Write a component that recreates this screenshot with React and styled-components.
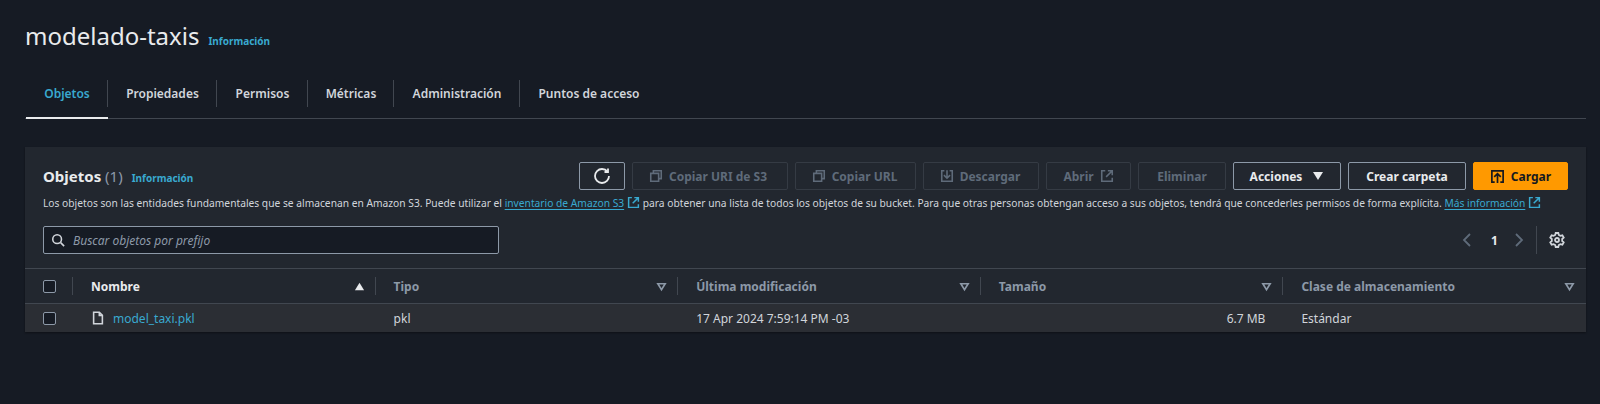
import React from "react";
import styled, { createGlobalStyle } from "styled-components";

const colors = {
  page: "#161b24",
  panel: "#22272f",
  rowBg: "#2b2e34",
  line: "#414750",
  text: "#d1d5db",
  strong: "#e9ebed",
  muted: "#8d99a8",
  disabled: "#5f6b7a",
  link: "#39a9cf",
  orange: "#ff9900",
};

const GlobalStyle = createGlobalStyle`
  html, body {
    margin: 0;
    background: ${colors.page};
    font-family: "Noto Sans", "Open Sans", sans-serif;
    color: ${colors.text};
  }
  body { overflow: hidden; }
`;

const Page = styled.div`
  width: 1600px;
  height: 404px;
  box-sizing: border-box;
  padding: 20px 14px 0 25px;
  background: ${colors.page};
`;

const TitleRow = styled.div`
  display: flex;
  align-items: baseline;
  gap: 9px;
  height: 32px;
`;

const Title = styled.h1`
  margin: 0;
  font-size: 24px;
  line-height: 32px;
  font-weight: 400;
  color: ${colors.strong};
`;

const InfoLink = styled.a`
  font-size: 10px;
  font-weight: 700;
  color: ${colors.link};
`;

const Tabs = styled.div`
  display: flex;
  align-items: stretch;
  height: 67px;
  border-bottom: 1px solid ${colors.line};
  box-sizing: border-box;
  padding: 28px 0 0 1px;
`;

const Tab = styled.div`
  position: relative;
  width: ${(p) => p.$width}px;
  height: 38px;
  box-sizing: border-box;
  display: flex;
  align-items: flex-start;
  justify-content: center;
  font-size: 12px;
  line-height: 27px;
  font-weight: 600;
  color: ${(p) => (p.$active ? colors.link : colors.text)};

  &::after {
    content: "";
    display: ${(p) => (p.$last ? "none" : "block")};
    position: absolute;
    right: 0;
    top: 0;
    height: 27px;
    width: 1px;
    background: ${colors.line};
  }

  &::before {
    content: "";
    display: ${(p) => (p.$active ? "block" : "none")};
    position: absolute;
    left: 0;
    right: 0;
    bottom: -1px;
    height: 2px;
    background: ${colors.strong};
  }
`;

const Panel = styled.section`
  margin-top: 28px;
  height: 185px;
  background: ${colors.panel};
  box-shadow: 0 1px 2px rgba(0, 0, 0, 0.4);
`;

const PanelHead = styled.div`
  padding: 15px 18px 14px;
`;

const HeadTop = styled.div`
  display: flex;
  align-items: center;
  justify-content: space-between;
  height: 28px;
`;

const Heading = styled.div`
  display: flex;
  align-items: baseline;
  gap: 9px;
`;

const HeadingTitle = styled.h2`
  margin: 0;
  font-size: 15px;
  font-weight: 700;
  color: ${colors.strong};

  span {
    font-weight: 400;
    color: ${colors.muted};
  }
`;

const Actions = styled.div`
  display: flex;
  gap: 7px;
`;

const Button = styled.button`
  display: flex;
  align-items: center;
  justify-content: center;
  gap: ${(p) => p.$gap || 6}px;
  width: ${(p) => p.$width}px;
  height: 28px;
  padding: 0 ${(p) => p.$endSpace || 0}px 0 0;
  box-sizing: border-box;
  border-radius: 2px;
  border: 1px solid ${(p) => (p.$disabled ? "#353b44" : p.$primary ? colors.orange : "#8d99a8")};
  background: ${(p) => (p.$primary ? colors.orange : "transparent")};
  color: ${(p) => (p.$disabled ? colors.disabled : p.$primary ? "#16191f" : colors.strong)};
  font-family: inherit;
  font-size: 12px;
  font-weight: 700;
`;

const Description = styled.p`
  margin: 0;
  height: 23px;
  font-size: 10.24px;
  line-height: 26px;
  white-space: nowrap;
  color: ${colors.text};
`;

const Ext = styled.a`
  color: ${colors.link};
  text-decoration: underline;
  text-underline-offset: 2px;
`;

const ExtIcon = styled.span`
  display: inline-flex;
  vertical-align: -2px;
  margin-left: 3px;
  color: ${colors.link};
`;

const FilterRow = styled.div`
  display: flex;
  align-items: center;
  justify-content: space-between;
  height: 28px;
  margin-top: 13px;
`;

const SearchBox = styled.div`
  display: flex;
  align-items: center;
  gap: 8px;
  width: 456px;
  height: 28px;
  box-sizing: border-box;
  padding-left: 7px;
  background: ${colors.page};
  border: 1px solid ${colors.muted};
  border-radius: 2px;
  color: ${colors.text};
`;

const Placeholder = styled.span`
  font-size: 12px;
  font-style: italic;
  color: ${colors.muted};
`;

const Pager = styled.div`
  display: flex;
  align-items: center;
  height: 28px;
  padding-right: 3px;
  color: ${colors.disabled};
`;

const PageNumber = styled.span`
  width: 36px;
  box-sizing: border-box;
  padding-left: 3px;
  text-align: center;
  font-size: 12px;
  font-weight: 700;
  color: ${colors.strong};
`;

const PagerDivider = styled.span`
  width: 1px;
  height: 28px;
  margin: 0 12px 0 9px;
  background: ${colors.line};
`;

const SettingsButton = styled.span`
  display: flex;
  color: ${colors.text};
`;

const Grid = styled.div`
  display: grid;
  grid-template-columns: 48px repeat(5, 1fr);
  align-items: center;
  height: ${(p) => p.$height}px;
  box-sizing: border-box;
  border-top: 1px solid ${colors.line};
  background: ${(p) => (p.$row ? colors.rowBg : "transparent")};
`;

const HeadCell = styled.div`
  display: flex;
  align-items: center;
  justify-content: space-between;
  height: 18px;
  padding: 0 ${(p) => (p.$last ? 11 : 10)}px 0 18px;
  font-size: 12px;
  font-weight: 700;
  color: ${(p) => (p.$active ? colors.strong : colors.muted)};
  border-right: ${(p) => (p.$last ? "none" : `1px solid ${colors.line}`)};
`;

const CheckCell = styled.div`
  display: flex;
  align-items: center;
  height: 18px;
  padding-left: 18px;
  border-right: ${(p) => (p.$bare ? "none" : `1px solid ${colors.line}`)};
`;

const Check = styled.span`
  display: block;
  width: 13px;
  height: 13px;
  box-sizing: border-box;
  border: 1px solid ${colors.muted};
  border-radius: 2px;
  background: ${colors.page};
`;

const Cell = styled.div`
  display: flex;
  align-items: center;
  justify-content: ${(p) => (p.$right ? "flex-end" : "flex-start")};
  gap: 8px;
  padding: 0 ${(p) => (p.$right ? 18 : 10)}px 0 18px;
  font-size: 12px;
  color: ${colors.text};
`;

const FileLink = styled.a`
  color: ${colors.link};
`;

const Icon = ({ size = 16, children }) => (
  <svg
    width={size}
    height={size}
    viewBox="0 0 16 16"
    fill="none"
    stroke="currentColor"
    strokeWidth="1.8"
  >
    {children}
  </svg>
);

const RefreshIcon = () => (
  <Icon>
    <path d="M15 8c0 3.9-3.1 7-7 7s-7-3.1-7-7 3.1-7 7-7c2.2 0 4.2 1 5.5 2.6" />
    <path d="M14 .5V4h-3.5" />
  </Icon>
);

const CopyIcon = () => (
  <Icon size={14}>
    <path d="M2 5h9v9H2z" />
    <path d="M5 5V2h9v9h-3" />
  </Icon>
);

const DownloadIcon = () => (
  <Icon size={14}>
    <path d="M5 2H2v12h12V2h-3" />
    <path d="M4.5 7 8 10.5 11.5 7M8 1.500v9" />
  </Icon>
);

const UploadIcon = () => (
  <Icon size={15}>
    <path d="M5 14H2V2h12v12h-3" />
    <path d="M4.500 8.500 8 5l3.500 3.500M8 5v10" />
  </Icon>
);

const ExternalIcon = ({ size = 14 }) => (
  <Icon size={size}>
    <path d="M6 2H2v12h12v-4" />
    <path d="M9 2h5v5M14 2 7 9" />
  </Icon>
);

const SearchIcon = () => (
  <Icon size={14}>
    <circle cx="7" cy="7" r="5" />
    <path d="m11 11 4 4" />
  </Icon>
);

const CaretDown = () => (
  <svg width="12" height="12" viewBox="0 0 12 12" fill="currentColor">
    <path d="M1 2h10L6 10z" />
  </svg>
);

const SortUp = () => (
  <svg width="11" height="11" viewBox="0 0 12 12" fill="currentColor">
    <path d="M1 10h10L6 2z" />
  </svg>
);

const SortDown = () => (
  <svg width="11" height="11" viewBox="0 0 12 12" fill="none" stroke="currentColor" strokeWidth="1.8">
    <path d="M2 3h8L6 9.500z" />
  </svg>
);

const Chevron = ({ left }) => (
  <Icon>
    <path d={left ? "M11 2 5 8l6 6" : "M5 2l6 6-6 6"} />
  </Icon>
);

const GearIcon = () => (
  <Icon>
    <circle cx="8" cy="8" r="2" />
    <path d="M6.700 1h2.600l.5 2 1.600.9 2-.6 1.300 2.300-1.500 1.400v2l1.500 1.400-1.300 2.300-2-.6-1.600.9-.5 2H6.700l-.5-2-1.600-.9-2 .6-1.300-2.300L2.800 9V7L1.300 5.600l1.300-2.300 2 .6 1.600-.9z" />
  </Icon>
);

const FileIcon = () => (
  <Icon size={14}>
    <path d="M9.500 1.500H3v13h10V5z" />
    <path d="M9.500 1.500V5H13" />
  </Icon>
);

const tabs = [
  { label: "Objetos", width: 82, active: true },
  { label: "Propiedades", width: 109 },
  { label: "Permisos", width: 91 },
  { label: "Métricas", width: 86 },
  { label: "Administración", width: 126 },
  { label: "Puntos de acceso", width: 138, last: true },
];

const columns = ["Tipo", "Última modificación", "Tamaño", "Clase de almacenamiento"];

const App = () => (
  <Page>
    <GlobalStyle />
    <TitleRow>
      <Title>modelado-taxis</Title>
      <InfoLink>Información</InfoLink>
    </TitleRow>
    <Tabs>
      {tabs.map((tab) => (
        <Tab key={tab.label} $width={tab.width} $active={tab.active} $last={tab.last}>
          {tab.label}
        </Tab>
      ))}
    </Tabs>
    <Panel>
      <PanelHead>
        <HeadTop>
          <Heading>
            <HeadingTitle>
              Objetos <span>(1)</span>
            </HeadingTitle>
            <InfoLink>Información</InfoLink>
          </Heading>
          <Actions>
            <Button $width={46}>
              <RefreshIcon />
            </Button>
            <Button $width={156} $disabled $endSpace={4}>
              <CopyIcon />
              Copiar URI de S3
            </Button>
            <Button $width={121} $disabled $endSpace={2}>
              <CopyIcon />
              Copiar URL
            </Button>
            <Button $width={116} $disabled $endSpace={2}>
              <DownloadIcon />
              Descargar
            </Button>
            <Button $width={85} $disabled>
              Abrir
              <ExternalIcon />
            </Button>
            <Button $width={88} $disabled>
              Eliminar
            </Button>
            <Button $width={108} $gap={10}>
              Acciones
              <CaretDown />
            </Button>
            <Button $width={118}>Crear carpeta</Button>
            <Button $width={95} $primary>
              <UploadIcon />
              Cargar
            </Button>
          </Actions>
        </HeadTop>
        <Description>
          Los objetos son las entidades fundamentales que se almacenan en Amazon S3. Puede utilizar el{" "}
          <Ext>inventario de Amazon S3</Ext>
          <ExtIcon>
            <ExternalIcon size={13} />
          </ExtIcon>{" "}
          para obtener una lista de todos los objetos de su bucket. Para que otras personas obtengan acceso a
          sus objetos, tendrá que concederles permisos de forma explícita. <Ext>Más información</Ext>
          <ExtIcon>
            <ExternalIcon size={13} />
          </ExtIcon>
        </Description>
        <FilterRow>
          <SearchBox>
            <SearchIcon />
            <Placeholder>Buscar objetos por prefijo</Placeholder>
          </SearchBox>
          <Pager>
            <Chevron left />
            <PageNumber>1</PageNumber>
            <Chevron />
            <PagerDivider />
            <SettingsButton>
              <GearIcon />
            </SettingsButton>
          </Pager>
        </FilterRow>
      </PanelHead>
      <Grid $height={35}>
        <CheckCell>
          <Check />
        </CheckCell>
        <HeadCell $active>
          Nombre
          <SortUp />
        </HeadCell>
        {columns.map((name, i) => (
          <HeadCell key={name} $last={i === columns.length - 1}>
            {name}
            <SortDown />
          </HeadCell>
        ))}
      </Grid>
      <Grid $height={29} $row>
        <CheckCell $bare>
          <Check />
        </CheckCell>
        <Cell>
          <FileIcon />
          <FileLink>model_taxi.pkl</FileLink>
        </Cell>
        <Cell>pkl</Cell>
        <Cell>17 Apr 2024 7:59:14 PM -03</Cell>
        <Cell $right>6.7 MB</Cell>
        <Cell>Estándar</Cell>
      </Grid>
    </Panel>
  </Page>
);

export default App;
